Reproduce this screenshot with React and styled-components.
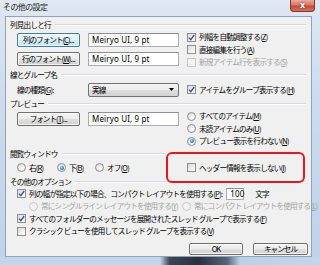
import React from "react";
import styled, { createGlobalStyle } from "styled-components";

const GlobalStyle = createGlobalStyle`
  html, body {
    margin: 0;
    padding: 0;
    background: #ffffff;
  }
  body {
    font-family: "Noto Sans CJK JP", "Noto Sans", sans-serif;
  }
`;

const Window = styled.div`
  width: 320px;
  height: 265px;
  display: flex;
  flex-direction: column;
  background: linear-gradient(180deg, #dfe8f3 0%, #cddcee 35%, #bfd2e8 100%);
  overflow: hidden;
`;

const TitleBar = styled.div`
  height: 16px;
  flex: none;
  display: flex;
  align-items: flex-start;
  padding-left: 3px;
`;

const Title = styled.span`
  font-size: 8px;
  line-height: 14px;
  letter-spacing: -0.6px;
  color: #1b1b1b;
`;

const CloseButton = styled.div`
  margin-left: auto;
  margin-right: 5px;
  width: 25px;
  height: 12px;
  box-sizing: border-box;
  border: 1px solid #8a3327;
  border-top: none;
  border-radius: 0 0 4px 4px;
  background: linear-gradient(180deg, #e9ab9e 0%, #d67866 45%, #c24a35 55%, #d4735d 100%);
  color: #ffffff;
  font: bold 8px/11px "DejaVu Sans", sans-serif;
  text-align: center;
  text-shadow: 0 0 2px #6b1a10;
`;

const Client = styled.div`
  flex: 1;
  margin: 0 8px 0 5px;
  background: #f0f0f0;
  border: 1px solid #91a3b9;
  padding: 2px 2px 0 4px;
  display: flex;
  flex-direction: column;
  font-size: 7.6px;
  letter-spacing: -0.8px;
  line-height: 12px;
  color: #000000;
`;

const BottomFrame = styled.div`
  height: 8px;
  flex: none;
  background: linear-gradient(90deg, #c3d5ea 0%, #c3d5ea 50%, #3c4656 53%, #2a313c 62%, #55647a 71%, #bcd0e7 75%, #c3d5ea 100%);
`;

const Header = styled.div`
  height: 12px;
  display: flex;
  align-items: center;
  margin-right: 3px;
  white-space: nowrap;

  &::after {
    content: "";
    flex: 1;
    height: 0;
    margin-left: 4px;
    margin-right: ${(p) => p.$lineEnd || 0}px;
    border-top: 1px solid #d5d9de;
    border-bottom: 1px solid #ffffff;
  }
`;

const Body = styled.div`
  display: flex;
  gap: 7px;
  padding-left: 7px;
  height: ${(p) => p.$h}px;
`;

const LeftGrid = styled.div`
  width: 163px;
  flex: none;
  display: grid;
  grid-template-columns: 63px 91px;
  column-gap: 8px;
  row-gap: 5px;
  grid-auto-rows: ${(p) => p.$row || 14}px;
  align-content: ${(p) => (p.$center ? "center" : "start")};
  margin-top: ${(p) => p.$top || 0}px;
`;

const OptionColumn = styled.div`
  position: relative;
  display: flex;
  flex-direction: column;
  justify-content: ${(p) => (p.$center ? "center" : "flex-start")};
`;

const Option = styled.div`
  height: 12.5px;
  display: flex;
  align-items: center;
  gap: 3px;
  white-space: nowrap;
  flex: none;
  width: ${(p) => (p.$w ? `${p.$w}px` : "auto")};
  color: ${(p) => (p.$disabled ? "#a3a3a3" : "#000000")};
`;

const Box = styled.span`
  width: 7px;
  height: 7px;
  flex: none;
  border: 1px solid ${(p) => (p.$disabled ? "#c8c8c8" : "#8e8f8f")};
  background: ${(p) =>
    p.$disabled ? "#f4f4f4" : "linear-gradient(135deg, #d8d8d8 0%, #f6f6f6 70%, #ffffff 100%)"};
  display: flex;
  align-items: center;
  justify-content: center;
`;

const Circle = styled.span`
  width: 7px;
  height: 7px;
  flex: none;
  border-radius: 50%;
  border: 1px solid ${(p) => (p.$disabled ? "#c8c8c8" : "#8e8f8f")};
  background: ${(p) =>
    p.$disabled ? "#f4f4f4" : "radial-gradient(circle at 65% 65%, #ffffff 0%, #e6e6e6 60%, #cfcfcf 100%)"};
  display: flex;
  align-items: center;
  justify-content: center;

  &::after {
    content: "";
    display: ${(p) => (p.$on ? "block" : "none")};
    width: 4px;
    height: 4px;
    border-radius: 50%;
    background: radial-gradient(circle at 35% 35%, #9fdcfa 0%, #2c86cf 55%, #0f4f93 100%);
  }
`;

const Key = styled.span`
  text-decoration: underline;
`;

const Dots = styled.span`
  letter-spacing: -0.6px;
`;

const Button = styled.button`
  height: ${(p) => p.$h || 14}px;
  width: ${(p) => p.$w || 63}px;
  padding: 0;
  box-sizing: border-box;
  overflow: visible;
  border: 1px solid ${(p) => (p.$focus ? "#3c7fb1" : "#707070")};
  border-radius: 2px;
  background: ${(p) =>
    p.$focus
      ? "linear-gradient(180deg, #f1f9fe 0%, #e3f2fb 50%, #d2ebf9 51%, #c8e6f8 100%)"
      : "linear-gradient(180deg, #f4f4f4 0%, #ececec 50%, #dfdfdf 51%, #d2d2d2 100%)"};
  box-shadow: inset 0 0 0 1px rgba(255, 255, 255, 0.7);
  font: inherit;
  letter-spacing: -1px;
  line-height: 10px;
  color: #000000;
  white-space: nowrap;
  text-align: center;
`;

const TextBox = styled.div`
  box-sizing: border-box;
  width: ${(p) => (p.$w ? `${p.$w}px` : "auto")};
  height: ${(p) => (p.$h ? `${p.$h}px` : "auto")};
  border: 1px solid #abadb3;
  border-top-color: #8e9095;
  background: #ffffff;
  display: flex;
  align-items: center;
  padding-left: 3px;
  font-family: "Noto Sans", "Liberation Sans", sans-serif;
  font-size: 8px;
  letter-spacing: 0.15px;
  color: #000000;
  white-space: nowrap;
`;

const Combo = styled.div`
  box-sizing: border-box;
  height: 14px;
  border: 1px solid #707070;
  border-radius: 2px;
  background: linear-gradient(180deg, #f4f4f4 0%, #ececec 50%, #dfdfdf 51%, #d2d2d2 100%);
  display: flex;
  align-items: center;
  justify-content: space-between;
  padding: 0 4px 0 3px;
`;

const FieldLabel = styled.div`
  display: flex;
  align-items: center;
  white-space: nowrap;
`;

const Annotation = styled.div`
  position: absolute;
  left: -21px;
  top: -8px;
  width: 139px;
  height: 31px;
  box-sizing: border-box;
  border: 2px solid #e8161c;
  border-radius: 6px;
  pointer-events: none;
`;

const Row = styled.div`
  display: flex;
  align-items: center;
  height: ${(p) => p.$h || 12.5}px;
  padding-left: ${(p) => 7 + (p.$indent || 0)}px;
  white-space: nowrap;
`;

const RadioRow = styled.div`
  display: flex;
  align-items: center;
  width: 163px;
  flex: none;
`;

const Unit = styled.span`
  margin-left: 11px;
`;

const Footer = styled.div`
  display: flex;
  justify-content: flex-end;
  gap: 10px;
  margin-top: 5px;
  padding-right: 1px;
`;

const Check = ({ on, disabled, children, w }) => (
  <Option $disabled={disabled} $w={w}>
    <Box $disabled={disabled}>
      {on && (
        <svg width="7" height="7" viewBox="0 0 7 7">
          <path d="M1 3.6 L2.8 5.6 L6.2 1" fill="none" stroke="#3b4f8f" strokeWidth="1.3" />
        </svg>
      )}
    </Box>
    <span>{children}</span>
  </Option>
);

const Radio = ({ on, disabled, children, w }) => (
  <Option $disabled={disabled} $w={w}>
    <Circle $on={on} $disabled={disabled} />
    <span>{children}</span>
  </Option>
);

const Arrow = () => (
  <svg width="5" height="3" viewBox="0 0 5 3">
    <path d="M0 0 H5 L2.5 3 Z" fill="#000" />
  </svg>
);

const FONT = "Meiryo UI, 9 pt";

export default function App() {
  return (
    <>
      <GlobalStyle />
      <Window>
        <TitleBar>
          <Title>その他の設定</Title>
          <CloseButton>x</CloseButton>
        </TitleBar>
        <Client>
          <Header>列見出しと行</Header>
          <Body $h={38}>
            <LeftGrid $top={2}>
              <Button $focus>
                列のフォント(<Key>C</Key>)<Dots>...</Dots>
              </Button>
              <TextBox>{FONT}</TextBox>
              <Button>
                行のフォント(<Key>W</Key>)<Dots>...</Dots>
              </Button>
              <TextBox>{FONT}</TextBox>
            </LeftGrid>
            <OptionColumn>
              <Check on>
                列幅を自動調整する(<Key>Z</Key>)
              </Check>
              <Check>
                直接編集を行う(<Key>A</Key>)
              </Check>
              <Check disabled>
                新規アイテム行を表示する(<Key>S</Key>)
              </Check>
            </OptionColumn>
          </Body>

          <Header>線とグループ名</Header>
          <Body $h={17}>
            <LeftGrid $center>
              <FieldLabel>
                線の種類(<Key>G</Key>):
              </FieldLabel>
              <Combo>
                <span>実線</span>
                <Arrow />
              </Combo>
            </LeftGrid>
            <OptionColumn $center>
              <Check on>
                アイテムをグループ表示する(<Key>H</Key>)
              </Check>
            </OptionColumn>
          </Body>

          <Header>プレビュー</Header>
          <Body $h={37.5}>
            <LeftGrid $top={2}>
              <Button>
                フォント(<Key>T</Key>)<Dots>...</Dots>
              </Button>
              <TextBox>{FONT}</TextBox>
            </LeftGrid>
            <OptionColumn>
              <Radio>
                すべてのアイテム(<Key>M</Key>)
              </Radio>
              <Radio>
                未読アイテムのみ(<Key>U</Key>)
              </Radio>
              <Radio on>
                プレビュー表示を行わない(<Key>N</Key>)
              </Radio>
            </OptionColumn>
          </Body>

          <Header $lineEnd={141}>閲覧ウィンドウ</Header>
          <Body $h={16}>
            <RadioRow>
              <Radio w={40}>
                右(<Key>R</Key>)
              </Radio>
              <Radio w={38} on>
                下(<Key>B</Key>)
              </Radio>
              <Radio>
                オフ(<Key>O</Key>)
              </Radio>
            </RadioRow>
            <OptionColumn $center>
              <Check>
                ヘッダー情報を表示しない(<Key>I</Key>)
              </Check>
              <Annotation />
            </OptionColumn>
          </Body>

          <Header>その他のオプション</Header>
          <Row>
            <Check on>
              列の幅が指定以下の場合、コンパクト レイアウトを使用する(<Key>P</Key>):
            </Check>
            <TextBox $w={18} $h={12} style={{ marginLeft: 4 }}>
              100
            </TextBox>
            <Unit>文字</Unit>
          </Row>
          <Row $indent={12}>
            <Radio disabled w={153}>
              常にシングルライン レイアウトを使用する(<Key>Y</Key>)
            </Radio>
            <Radio disabled>
              常にコンパクト レイアウトを使用する(<Key>L</Key>)
            </Radio>
          </Row>
          <Row>
            <Check on>
              すべてのフォルダーのメッセージを展開されたスレッド グループで表示する(<Key>F</Key>)
            </Check>
          </Row>
          <Row>
            <Check>
              クラシック ビューを使用してスレッド グループを表示する(<Key>V</Key>)
            </Check>
          </Row>

          <Footer>
            <Button $w={54} $h={12}>OK</Button>
            <Button $w={55} $h={12}>キャンセル</Button>
          </Footer>
        </Client>
        <BottomFrame />
      </Window>
    </>
  );
}
